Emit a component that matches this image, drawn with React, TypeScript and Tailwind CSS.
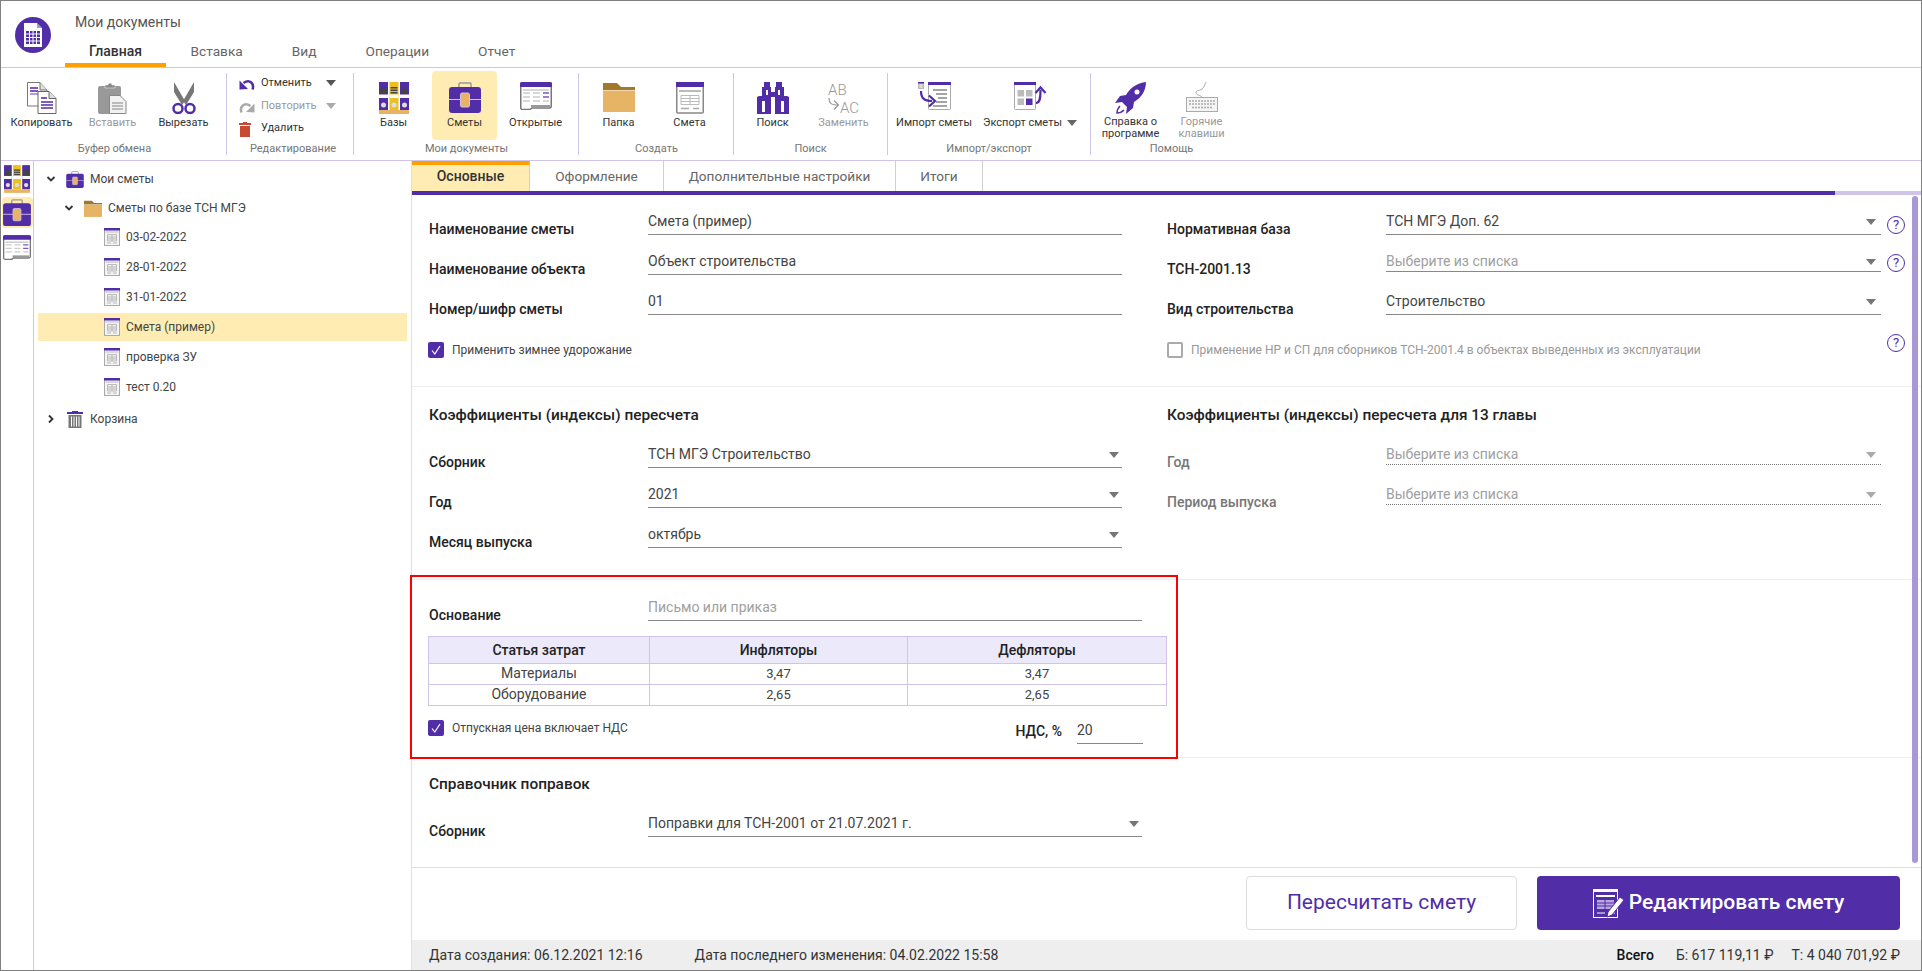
import type { ReactNode } from 'react';

const purple = '#512da8';

function LogoIcon() {
  return (
    <svg width="36" height="36" viewBox="0 0 36 36">
      <circle cx="18" cy="18" r="18" fill={purple} />
      <path d="M9 6h13l5 5v19H9z" fill="#fff" />
      <path d="M22 6v5h5z" fill={purple} opacity=".5" />
      <rect x="11" y="14" width="14" height="13" fill={purple} />
      <path d="M11 17h14M11 20.500h14M11 24h14M14.500 14v13M18 14v13M21.500 14v13" stroke="#fff" strokeWidth="1" />
    </svg>
  );
}

function CopyIcon() {
  return (
    <svg width="30" height="32" viewBox="0 0 30 32">
      <path d="M.5.500H13L20 8v16H.500z" fill="#fff" stroke="#777" />
      <path d="M13 .5V8h7" fill="#ddd" stroke="#777" />
      <rect x="3" y="5" width="8" height="2" fill="#7e57c2" />
      <rect x="3" y="8" width="8" height="2" fill="#7e57c2" />
      <rect x="3" y="11" width="8" height="2" fill="#b39ddb" />
      <path d="M11 9.500h11l7 7v15H11z" fill="#fff" stroke="#666" />
      <path d="M22 9.500v7h7" fill="#ddd" stroke="#666" />
      <rect x="14" y="15" width="6" height="2" fill="#7e57c2" />
      <path d="M14 20h12M14 23h12M14 26h12" stroke={purple} strokeWidth="1.500" />
    </svg>
  );
}

function PasteIcon() {
  return (
    <svg width="30" height="32" viewBox="0 0 30 32">
      <rect x="0" y="4" width="23" height="28" rx="2" fill="#999" />
      <path d="M7 6V3h3a2 2 0 0 1 4 0h3v3z" fill="#888" stroke="#fff" strokeWidth=".5" />
      <path d="M11.500 13.500H22l6 6v12H11.500z" fill="#f2f2f2" stroke="#888" />
      <path d="M14 21h11M14 24h11M14 27h11" stroke="#aaa" strokeWidth="1.500" />
    </svg>
  );
}

function ScissorsIcon() {
  return (
    <svg width="26" height="32" viewBox="0 0 26 32">
      <path d="M3 0l11 19-3 4-8-13z" fill="#777" />
      <path d="M23 0L12 19l3 4 8-13z" fill="#777" />
      <circle cx="7" cy="26.500" r="4.500" fill="none" stroke={purple} strokeWidth="2.500" />
      <circle cx="19" cy="26.500" r="4.500" fill="none" stroke={purple} strokeWidth="2.500" />
    </svg>
  );
}

function UndoIcon({ color = purple, flip = false }: { color?: string; flip?: boolean }) {
  return (
    <svg width="16" height="13" viewBox="0 0 16 13" className={flip ? '-scale-x-100' : ''}>
      <path d="M13.500 12.500C15.500 7 11 1.500 4.500 6" fill="none" stroke={color} strokeWidth="2.500" />
      <path d="M.5 12.500V3.500l8.500 8.500z" fill={color} />
    </svg>
  );
}

function TrashRed() {
  return (
    <svg width="12" height="16" viewBox="0 0 12 16">
      <path d="M4 1h4v1h4v2H0V2h4z" fill="#c84a30" />
      <path d="M1 5h10v11H1z" fill="#c84a30" />
    </svg>
  );
}

function BasesIcon({ w = 30, h = 32 }: { w?: number; h?: number }) {
  return (
    <svg width={w} height={h} viewBox="0 0 30 32">
      {[0, 10.500, 21].map((x, i) => (
        <g key={x}>
          <rect x={x} width="9" height="28" fill={i === 1 ? '#ecc01f' : purple} />
          <rect x={x + 1} y="5" width="7" height="1.500" fill="#444" />
          <rect x={x + 1} y="7.500" width="7" height="1.500" fill="#444" />
          <rect x={x + 1} y="10" width="7" height="1.500" fill="#444" />
          <rect x={x} y="12.500" width="9" height="3.500" fill="#fff" />
          <circle cx={x + 4.500} cy="23" r="2.500" fill="#ddd" />
        </g>
      ))}
      <rect y="28" width="30" height="4" fill="#e8b464" />
    </svg>
  );
}

function CaseIcon({ w = 32, h = 31 }: { w?: number; h?: number }) {
  return (
    <svg width={w} height={h} viewBox="0 0 32 31">
      <path d="M10 6V2q0-1 1-1h10q1 0 1 1v4" fill="none" stroke="#999" strokeWidth="1.500" />
      <rect y="5" width="32" height="26" rx="3" fill={purple} />
      <rect y="17" width="32" height="1" fill="#d1c4e9" />
      <rect x="11.500" y="11" width="9" height="14" rx="1.500" fill="#e8b464" stroke="#d1c4e9" />
    </svg>
  );
}

function OpenedIcon({ w = 32, h = 28 }: { w?: number; h?: number }) {
  return (
    <svg width={w} height={h} viewBox="0 0 32 28">
      <path d="M.75 2a1.500 1.500 0 0 1 1.500-1.500h27.500a1.500 1.500 0 0 1 1.500 1.500v22a2 2 0 0 1-2 2H12l-2 1.500H2.500a1.750 1.750 0 0 1-1.750-1.750z" fill="#fff" stroke="#777" strokeWidth="1.500" />
      <path d="M0 2a2 2 0 0 1 2-2h28a2 2 0 0 1 2 2v3H0z" fill={purple} />
      <path d="M3 11h7M13 11h7M3 15h7M13 15h7M3 19h7M13 19h7M3 8h26" stroke="#ccc" strokeWidth="1.500" />
      <path d="M23 11h6M23 15h6" stroke="#7e57c2" strokeWidth="1.500" />
      <path d="M23 19h6" stroke="#ccc" strokeWidth="1.500" />
      <path d="M11 24h19" stroke="#999" strokeWidth="2" />
    </svg>
  );
}

function FolderIcon({ w = 32, h = 30 }: { w?: number; h?: number }) {
  return (
    <svg width={w} height={h} viewBox="0 0 32 30">
      <path d="M0 7V1h14l4 4h14v3H0z" fill="#a07a2c" />
      <path d="M0 8.500h32V30H0z" fill="#e6b464" />
    </svg>
  );
}

function DocIcon({ w = 28, h = 32 }: { w?: number; h?: number }) {
  return (
    <svg width={w} height={h} viewBox="0 0 28 32">
      <rect x=".75" y="1" width="26.500" height="30" rx="1" fill="#fff" stroke="#888" strokeWidth="1.500" />
      <rect width="28" height="5" fill={purple} />
      <rect x="3" y="8" width="22" height="2" fill="#bbb" />
      <path d="M5 13.500h18v9H5zM5 16.500h18M5 19.500h18M14 13.500v9" fill="none" stroke="#bbb" />
      <path d="M5 26.500h8M17 26.500h6" stroke="#aaa" strokeWidth="1.500" />
    </svg>
  );
}

function SmallDocIcon() {
  return (
    <svg width="16" height="18" viewBox="0 0 16 18">
      <rect x=".5" y="1" width="15" height="16.500" fill="#f4f4f4" stroke="#aaa" />
      <rect width="16" height="2.500" fill={purple} />
      <rect x="1.500" y="3.500" width="13" height="1" fill="#bbb" />
      <path d="M3.500 6.500h9v6.500h-9zM3.500 9h9M3.500 11h9M8 6.500V13" fill="#eee" stroke="#bbb" />
      <path d="M3 15h4M9 15h4" stroke="#bbb" />
    </svg>
  );
}

function BinocularsIcon() {
  return (
    <svg width="32" height="32" viewBox="0 0 32 32">
      <path d="M7 0h6v5h1v5h4V5h1V0h6v5h2v9h3l2 1v17H18V15h-4v17H0V15l2-1h3V5h2z" fill={purple} />
      <rect x="5" y="19" width="3" height="11" fill="#fff" />
      <rect x="24" y="19" width="3" height="11" fill="#fff" />
      <rect x="9" y="8" width="2" height="5" fill="#fff" />
      <rect x="21" y="8" width="2" height="5" fill="#fff" />
    </svg>
  );
}

function ReplaceIcon() {
  return (
    <svg width="34" height="34" viewBox="0 0 34 34">
      <text x="1" y="13" fontFamily="Roboto, sans-serif" fontSize="15" fontWeight="300" fill="#999">AB</text>
      <text x="13" y="31" fontFamily="Roboto, sans-serif" fontSize="15" fontWeight="300" fill="#999">AC</text>
      <path d="M2 16c0 5 2 7 9 7M7 18.500l4.500 4.500L7 27.500" fill="none" stroke="#999" strokeWidth="1.200" />
    </svg>
  );
}

function ImportIcon() {
  return (
    <svg width="33" height="28" viewBox="0 0 33 28">
      <rect x="0" y="0" width="6" height="7" fill="#bbb" />
      <rect x="0" y="0" width="6" height="1.500" fill={purple} />
      <path d="M1.500 3h3M1.500 5h3" stroke="#fff" />
      <rect x="10.500" y="1" width="22" height="26.500" rx="1" fill="#fff" stroke="#aaa" />
      <rect x="10" width="23" height="3" fill={purple} />
      <path d="M15 8h14M18 12h11M20 16h9M18 20h11M15 24h14" stroke="#888" strokeWidth="1.500" />
      <path d="M3 9c0 7 3 10 11 10" fill="none" stroke={purple} strokeWidth="2.200" />
      <path d="M11 13.500l6 5.500-6 5.500" fill="none" stroke={purple} strokeWidth="2.200" />
    </svg>
  );
}

function ExportIcon() {
  return (
    <svg width="33" height="28" viewBox="0 0 33 28">
      <rect x=".5" y="1" width="21" height="26.500" rx="1" fill="#fff" stroke="#aaa" />
      <rect width="22" height="3" fill={purple} />
      <rect x="3.500" y="8" width="6.500" height="6.500" fill="#bbb" />
      <rect x="12" y="8" width="6.500" height="6.500" fill="#bbb" />
      <rect x="3.500" y="16.500" width="6.500" height="6.500" fill="#bbb" />
      <rect x="12" y="16.500" width="6.500" height="6.500" fill={purple} />
      <path d="M22 21c4 0 4.500-5 4.500-13" fill="none" stroke={purple} strokeWidth="2.200" />
      <path d="M21.500 11l5-5.500 5 5.500" fill="none" stroke={purple} strokeWidth="2.200" />
    </svg>
  );
}

function RocketIcon() {
  return (
    <svg width="32" height="32" viewBox="0 0 32 32">
      <path d="M31 0c-9 1-16 6-20 13l-6 1-5 7 7-1 5 5-1 7 7-6 1-6c7-4 12-11 12-20z" fill={purple} />
      <circle cx="22" cy="10" r="2.500" fill="#fff" />
      <path d="M5 24c-2 2-3 5-3 7 2 0 5-1 7-3" fill="none" stroke={purple} strokeWidth="1.500" />
    </svg>
  );
}

function KeyboardIcon() {
  return (
    <svg width="32" height="32" viewBox="0 0 32 32">
      <path d="M16 16c0-3-5-2-6-5s5-2 7-5 2-4 3-6" fill="none" stroke="#aaa" />
      <rect x=".5" y="15.500" width="31" height="14" fill="#f5f5f5" stroke="#aaa" />
      <path d="M3 19h26M3 22h26M6 25.500h20" stroke="#aaa" strokeWidth="1.500" strokeDasharray="2 1" />
    </svg>
  );
}

function BinIcon() {
  return (
    <svg width="16" height="18" viewBox="0 0 16 18">
      <path d="M5 1h6v1h5v2H0V2h5z" fill={purple} />
      <rect x="1.500" y="5" width="13" height="13" fill="#777" />
      <path d="M4.500 6.500V16.500M7 6.500V16.500M9.500 6.500V16.500M12 6.500V16.500" stroke="#fff" />
    </svg>
  );
}

function EditIcon() {
  return (
    <svg width="31" height="29" viewBox="0 0 31 29">
      <rect x=".5" y=".5" width="24" height="28" fill={purple} stroke="#fff" />
      <rect width="25" height="3" fill="#fff" />
      <rect x="3" y="6" width="19" height="2" fill="#fff" />
      <rect x="4" y="11" width="17" height="9" fill="#b9a8de" />
      <path d="M4 14h17M4 17h17M12 11v9" stroke={purple} />
      <path d="M4 24h8M16 24h6" stroke="#fff" />
      <path d="M27 8l4 3-12 15-5 2 1-5z" fill="#fff" stroke={purple} />
    </svg>
  );
}

function HelpIcon({ className = '' }: { className?: string }) {
  return (
    <div className={`w-[18px] h-[18px] shrink-0 rounded-full border border-[#512da8] text-[#512da8] text-[13px] leading-[16px] text-center ${className}`}>
      ?
    </div>
  );
}

function Caret({ color = '#757575' }: { color?: string }) {
  return (
    <svg width="10" height="6" viewBox="0 0 10 6" className="shrink-0">
      <path d="M0 0h10L5 6z" fill={color} />
    </svg>
  );
}

function Chevron({ open = true }: { open?: boolean }) {
  return (
    <svg width="10" height="10" viewBox="0 0 10 10" className={open ? 'shrink-0' : 'shrink-0 -rotate-90'}>
      <path d="M1.500 3L5 6.500 8.500 3" fill="none" stroke="#333" strokeWidth="1.800" />
    </svg>
  );
}

function Checkbox({ checked = true }: { checked?: boolean }) {
  if (!checked) {
    return <div className="w-4 h-4 shrink-0 rounded-[2px] border-2 border-[#aaaaaa] bg-white" />;
  }
  return (
    <div className="w-4 h-4 shrink-0 rounded-[2px] bg-[#512da8] flex items-center justify-center">
      <svg width="12" height="12" viewBox="0 0 12 12">
        <path d="M2 6.500L4.800 10 10 2" fill="none" stroke="#fff" strokeWidth="1.200" />
      </svg>
    </div>
  );
}

function RibbonButton({ label, icon, disabled, active, arrow, className = 'w-[65px]' }: {
  label: ReactNode;
  icon: ReactNode;
  disabled?: boolean;
  active?: boolean;
  arrow?: boolean;
  className?: string;
}) {
  return (
    <div className={`h-[69px] pt-[11px] rounded flex flex-col items-center shrink-0 ${active ? 'bg-[#ffecb3]' : ''} ${className}`}>
      <div className="h-[35px] flex items-start justify-center">{icon}</div>
      <div className={`text-[11px] leading-[12px] text-center whitespace-nowrap flex items-center gap-[5px] ${disabled ? 'text-[#999999]' : 'text-[#333333]'}`}>
        <span>{label}</span>
        {arrow && <Caret color="#666666" />}
      </div>
    </div>
  );
}

function Group({ title, children, className, border = true }: {
  title: string;
  children: ReactNode;
  className: string;
  border?: boolean;
}) {
  return (
    <div className={`h-[82px] shrink-0 ${border ? 'border-r border-[#d1c4e9]' : ''} ${className}`}>
      <div className="flex gap-[6px] -mt-[2px] h-[69px]">{children}</div>
      <div className="text-[11px] leading-[12px] text-center text-[#757575] mt-[3px] -ml-[6px]">{title}</div>
    </div>
  );
}

function EditRow({ icon, label, disabled, arrow }: { icon: ReactNode; label: string; disabled?: boolean; arrow?: boolean }) {
  return (
    <div className={`h-[23px] flex items-center text-[11px] ${disabled ? 'text-[#999999]' : 'text-[#333333]'}`}>
      <div className="w-[22px] flex items-center">{icon}</div>
      <span className="w-[65px]">{label}</span>
      {arrow && <Caret color={disabled ? '#aaaaaa' : '#555555'} />}
    </div>
  );
}

function Ribbon() {
  return (
    <div className="h-[93px] pt-[5px] flex border-b border-[#d1c4e9]">
      <Group title="Буфер обмена" className="w-[226px] pl-[8px]">
        <RibbonButton label="Копировать" icon={<CopyIcon />} />
        <RibbonButton label="Вставить" disabled icon={<PasteIcon />} />
        <RibbonButton label="Вырезать" icon={<ScissorsIcon />} />
      </Group>
      <Group title="Редактирование" className="w-[127px] pl-[12px]">
        <div className="flex flex-col w-[110px] pt-px">
          <EditRow icon={<UndoIcon />} label="Отменить" arrow />
          <EditRow icon={<UndoIcon color="#aaaaaa" flip />} label="Повторить" disabled arrow />
          <EditRow icon={<TrashRed />} label="Удалить" />
        </div>
      </Group>
      <Group title="Мои документы" className="w-[225px] pl-[7px]">
        <RibbonButton label="Базы" icon={<BasesIcon />} />
        <RibbonButton label="Сметы" active icon={<CaseIcon />} />
        <RibbonButton label="Открытые" icon={<OpenedIcon />} />
      </Group>
      <Group title="Создать" className="w-[155px] pl-[7px]">
        <RibbonButton label="Папка" icon={<FolderIcon />} />
        <RibbonButton label="Смета" icon={<DocIcon />} />
      </Group>
      <Group title="Поиск" className="w-[154px] pl-[6px]">
        <RibbonButton label="Поиск" icon={<BinocularsIcon />} />
        <RibbonButton label="Заменить" disabled icon={<ReplaceIcon />} />
      </Group>
      <Group title="Импорт/экспорт" className="w-[203px] pl-[6px]">
        <RibbonButton label="Импорт сметы" className="w-[80px]" icon={<ImportIcon />} />
        <RibbonButton label="Экспорт сметы" arrow className="w-[100px]" icon={<ExportIcon />} />
      </Group>
      <Group title="Помощь" border={false} className="w-[160px] pl-[7px]">
        <RibbonButton label={<>Справка о<br />программе</>} icon={<RocketIcon />} />
        <RibbonButton label={<>Горячие<br />клавиши</>} disabled icon={<KeyboardIcon />} />
      </Group>
    </div>
  );
}

const topTabs = ['Главная', 'Вставка', 'Вид', 'Операции', 'Отчет'];

function Header() {
  return (
    <div className="h-[67px] flex border-b border-[#d1c4e9]">
      <div className="w-[64px] pl-[14px] pt-[16px] shrink-0">
        <LogoIcon />
      </div>
      <div>
        <div className="pl-[10px] pt-[11px] h-[36px] text-[14px] leading-5 text-[#555555]">Мои документы</div>
        <div className="flex h-[30px]">
          {topTabs.map((tab, i) => (
            <div
              key={tab}
              className={`leading-[28px] border-b-4 ${i === 0 ? 'px-6 text-[14px] border-[#ffa000] font-medium text-[#333333]' : 'px-[24.5px] text-[13.7px] border-transparent text-[#666666]'}`}
            >
              {tab}
            </div>
          ))}
        </div>
      </div>
    </div>
  );
}

function TreeRow({ level, icon, label, open, active, mb = 'mb-[2px]' }: {
  level: number;
  icon: ReactNode;
  label: string;
  open?: boolean;
  active?: boolean;
  mb?: string;
}) {
  const indent = level === 0 ? 'pl-[8px]' : level === 1 ? 'pl-[26px]' : 'pl-[65px]';
  return (
    <div className={`h-[28px] flex items-center text-[12px] text-[#444444] ${indent} ${active ? 'bg-[#ffecb3]' : ''} ${mb}`}>
      {level < 2 && (
        <div className="w-[20px] shrink-0">
          <Chevron open={open} />
        </div>
      )}
      <div className={`shrink-0 mr-[6px] flex items-center justify-center ${level < 2 ? 'w-[18px]' : 'w-[17px]'}`}>{icon}</div>
      <span>{label}</span>
    </div>
  );
}

const estimates = ['03-02-2022', '28-01-2022', '31-01-2022', 'Смета (пример)', 'проверка ЗУ', 'тест 0.20'];

function Sidebar() {
  return (
    <div className="flex shrink-0">
      <div className="w-[33px] border-r border-[#d1c4e9] flex flex-col items-center pt-[4px]">
        <BasesIcon w={26} h={28} />
        <div className="mt-[4px] w-[31px] h-[31px] bg-[#ffecb3] rounded flex items-center justify-center">
          <CaseIcon w={28} h={27} />
        </div>
        <div className="mt-[7px]">
          <OpenedIcon w={28} h={25} />
        </div>
      </div>
      <div className="w-[378px] border-r border-[#e0e0e0] pt-[4px] pl-[4px] pr-[4px]">
        <TreeRow level={0} open mb="mb-[1px]" label="Мои сметы" icon={<CaseIcon w={18} h={17} />} />
        <TreeRow level={1} open mb="mb-[1px]" label="Сметы по базе ТСН МГЭ" icon={<FolderIcon w={18} h={17} />} />
        {estimates.map(name => (
          <TreeRow key={name} level={2} label={name} active={name === 'Смета (пример)'} icon={<SmallDocIcon />} />
        ))}
        <div className="mt-[4px]">
          <TreeRow level={0} open={false} label="Корзина" icon={<BinIcon />} />
        </div>
      </div>
    </div>
  );
}

const leftWidth = 'w-[474px] pr-[3px]';
const wideLeftWidth = 'w-[494px] pr-[3px]';
const rightWidth = 'w-[495px] pr-[5px]';
const shortBox = 'h-[24px] mb-[3px] pt-[4px]';

function Field({ label, value, placeholder, select, dotted, muted, help, width = leftWidth, box = 'h-[27px] pt-px', helpShift = 'mb-[1px]' }: {
  label: string;
  value?: string;
  placeholder?: string;
  select?: boolean;
  dotted?: boolean;
  muted?: boolean;
  help?: boolean;
  width?: string;
  box?: string;
  helpShift?: string;
}) {
  return (
    <div className="h-[40px] flex items-end">
      <div className={`w-[219px] shrink-0 h-5 leading-5 -mb-[4px] text-[14px] font-medium ${muted ? 'text-[#777777]' : 'text-[#222222]'}`}>{label}</div>
      <div className={`flex items-center justify-between border-b ${dotted ? 'border-dotted border-[#777777]' : 'border-[#888888]'} ${width} ${box}`}>
        <span className={`text-[14px] ${value ? 'text-[#444444]' : 'text-[#a0a0a0]'}`}>{value ?? placeholder}</span>
        {select && <Caret color={dotted ? '#aaaaaa' : '#757575'} />}
      </div>
      {help && <HelpIcon className={`ml-[6px] ${helpShift}`} />}
    </div>
  );
}

const tableRows = [
  ['Материалы', '3,47', '3,47'],
  ['Оборудование', '2,65', '2,65'],
];

function CostTable() {
  return (
    <table className="mt-[15px] -ml-px w-[739px] border-collapse table-fixed text-center">
      <thead>
        <tr className="h-[27px] bg-[#ece9fb] text-[14px] font-medium text-[#222222]">
          <th className="w-[221px] border border-[#d1c4e9] font-medium">Статья затрат</th>
          <th className="w-[258px] border border-[#d1c4e9] font-medium">Инфляторы</th>
          <th className="border border-[#d1c4e9] font-medium">Дефляторы</th>
        </tr>
      </thead>
      <tbody>
        {tableRows.map(row => (
          <tr key={row[0]} className="h-[21px] text-[#444444]">
            <td className="border border-[#d1c4e9] text-[14px] leading-4 pb-[2px]">{row[0]}</td>
            <td className="border border-[#d1c4e9] text-[13px] leading-4">{row[1]}</td>
            <td className="border border-[#d1c4e9] text-[13px] leading-4">{row[2]}</td>
          </tr>
        ))}
      </tbody>
    </table>
  );
}

const formTabs = [
  { name: 'Основные', width: 'w-[118px]' },
  { name: 'Оформление', width: 'w-[134px]' },
  { name: 'Дополнительные настройки', width: 'w-[232px]' },
  { name: 'Итоги', width: 'w-[87px]' },
];

function Form() {
  return (
    <div className="relative flex-1 flex flex-col min-h-0">
      <div className="h-[30px] flex shrink-0">
        {formTabs.map((tab, i) => (
          <div
            key={tab.name}
            className={`${tab.width} flex items-center justify-center border-r border-[#d0d0d0] ${i === 0 ? 'text-[14px] bg-[#ffecb3] border-t-4 border-t-[#ffa000] font-medium text-[#333333] pb-[3px]' : 'text-[13.6px] text-[#666666]'}`}
          >
            {tab.name}
          </div>
        ))}
      </div>
      <div className="h-[4px] flex shrink-0">
        <div className="w-[1423px] bg-[#512da8]" />
        <div className="flex-1 bg-[#d1c4e9]" />
      </div>

      <div className="absolute right-[3px] top-[35px] w-[6px] h-[667px] rounded-full bg-[#a899d6]" />

      <div className="pb-[28px] border-b border-[#eeeeee] pl-[17px] flex">
        <div className="w-[738px]">
          <Field label="Наименование сметы" value="Смета (пример)" />
          <Field label="Наименование объекта" value="Объект строительства" />
          <Field label="Номер/шифр сметы" value="01" />
          <div className="mt-[27px] -ml-px flex items-center gap-2 text-[12px] leading-4 text-[#444444]">
            <Checkbox />
            <span>Применить зимнее удорожание</span>
          </div>
        </div>
        <div>
          <Field label="Нормативная база" value="ТСН МГЭ Доп. 62" select help width={rightWidth} />
          <Field label="ТСН-2001.13" placeholder="Выберите из списка" select help width={rightWidth} box={shortBox} helpShift="mb-[3px]" />
          <Field label="Вид строительства" value="Строительство" select width={rightWidth} />
          <div className="mt-[27px] w-[738px] flex items-center text-[12px] leading-4 text-[#999999]">
            <Checkbox checked={false} />
            <span className="ml-2 flex-1">Применение НР и СП для сборников ТСН-2001.4 в объектах выведенных из эксплуатации</span>
            <HelpIcon className="-mt-[14px]" />
          </div>
        </div>
      </div>

      <div className="pt-[18px] pb-[31px] border-b border-[#eeeeee] pl-[17px] flex">
        <div className="w-[738px]">
          <h2 className="text-[15.4px] leading-5 font-medium text-[#222222] mb-[3px]">Коэффициенты (индексы) пересчета</h2>
          <Field label="Сборник" value="ТСН МГЭ Строительство" select />
          <Field label="Год" value="2021" select />
          <Field label="Месяц выпуска" value="октябрь" select />
        </div>
        <div>
          <h2 className="text-[15.4px] leading-5 font-medium text-[#222222] mb-[3px]">Коэффициенты (индексы) пересчета для 13 главы</h2>
          <Field label="Год" placeholder="Выберите из списка" select dotted muted width={rightWidth} box={shortBox} />
          <Field label="Период выпуска" placeholder="Выберите из списка" select dotted muted width={rightWidth} box={shortBox} />
        </div>
      </div>

      <div className="pt-px pb-[13px] border-b border-[#eeeeee] pl-[17px]">
        <Field label="Основание" placeholder="Письмо или приказ" width={wideLeftWidth} />
        <CostTable />
        <div className="mt-[14px] -ml-px w-[715px] flex items-start justify-between">
          <div className="flex items-center gap-2 text-[12px] leading-4 text-[#444444]">
            <Checkbox />
            <span>Отпускная цена включает НДС</span>
          </div>
          <div className="flex items-center -mt-[2px]">
            <span className="text-[14px] font-medium text-[#222222] mr-[15px]">НДС, %</span>
            <div className="w-[66px] h-[26px] flex items-center border-b border-[#888888] text-[14px] text-[#444444]">20</div>
          </div>
        </div>
      </div>

      <div className="pt-4 pl-[17px]">
        <h2 className="text-[15.4px] leading-5 font-medium text-[#222222] mb-[3px]">Справочник поправок</h2>
        <Field label="Сборник" value="Поправки для ТСН-2001 от 21.07.2021 г." select width={wideLeftWidth} />
      </div>

      <div className="mt-auto h-[73px] pt-2 pr-[21px] border-t border-[#e0e0e0] flex justify-end gap-5 shrink-0">
        <button className="w-[271px] h-[54px] rounded border border-[#dddddd] bg-white text-[21px] text-[#512da8]">Пересчитать смету</button>
        <button className="w-[363px] h-[54px] rounded bg-[#512da8] text-white text-[21px] font-medium flex items-center justify-center gap-[5px]">
          <EditIcon />
          Редактировать смету
        </button>
      </div>
    </div>
  );
}

export default function App() {
  return (
    <div className="relative w-[1922px] h-[971px] overflow-hidden border border-[#808080] bg-white flex flex-col font-[Roboto,sans-serif]">
      <Header />
      <Ribbon />
      <div className="flex flex-1 min-h-0">
        <Sidebar />
        <div className="flex-1 min-w-0 flex flex-col">
          <Form />
          <div className="h-[30px] shrink-0 pl-[17px] pr-[21px] bg-[#eeeeee] flex items-center text-[14px] text-[#333333]">
            <span>Дата создания: 06.12.2021 12:16</span>
            <span className="ml-[52px]">Дата последнего изменения: 04.02.2022 15:58</span>
            <span className="ml-auto font-medium text-[#111111]">Всего</span>
            <span className="ml-[22px]">Б: 617 119,11 ₽</span>
            <span className="ml-[18px]">Т: 4 040 701,92 ₽</span>
          </div>
        </div>
      </div>
      <div className="absolute left-[409px] top-[574px] w-[768px] h-[184px] border-2 border-[#ff0000] pointer-events-none" />
    </div>
  );
}
